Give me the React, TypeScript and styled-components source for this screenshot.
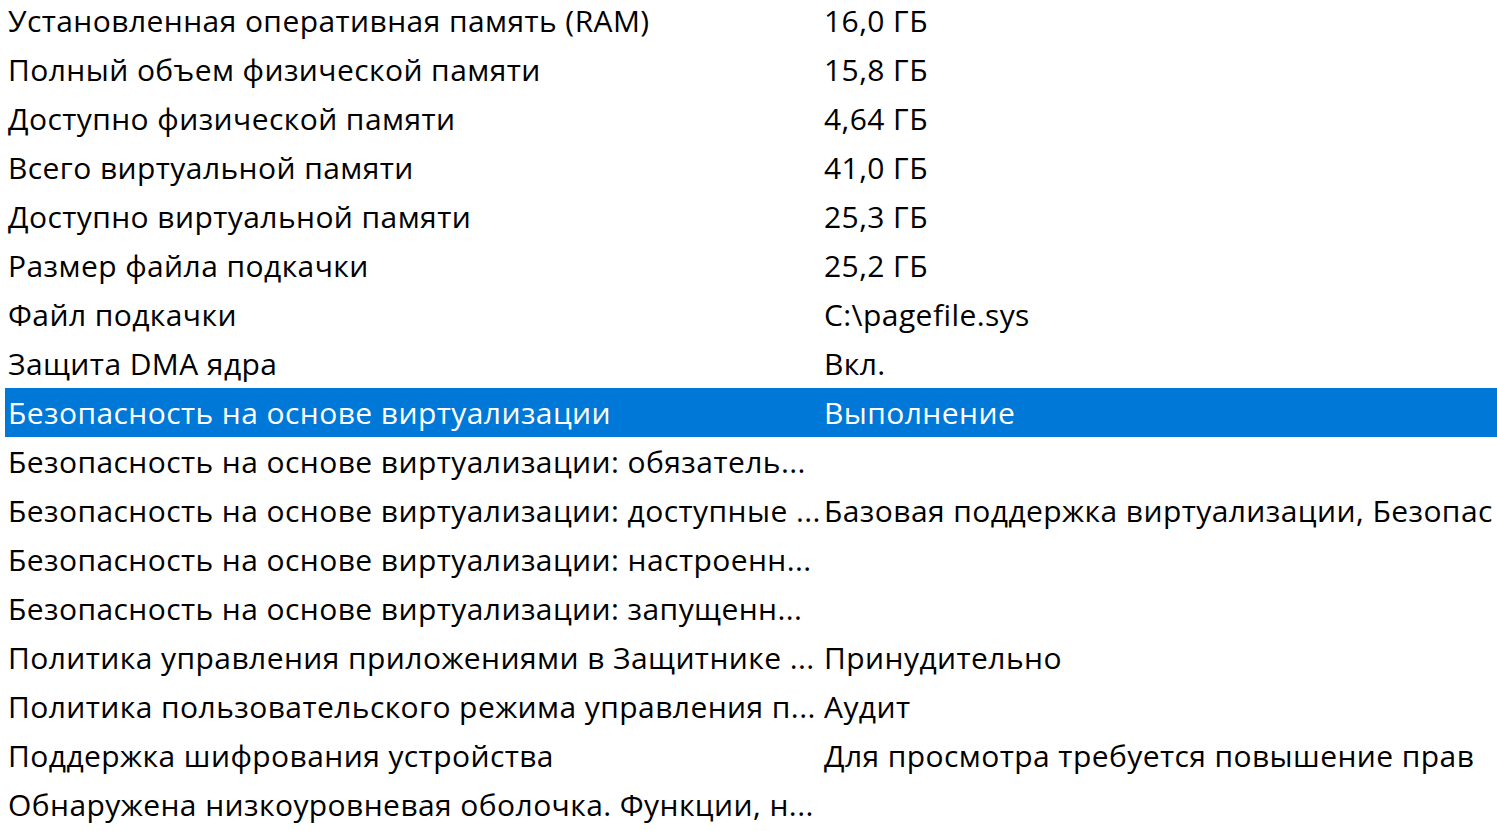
import styled, { createGlobalStyle } from 'styled-components';

const GlobalStyle = createGlobalStyle`
  html, body {
    margin: 0;
    padding: 0;
    background: #ffffff;
    overflow: hidden;
  }
`;

interface Item {
  name: string;
  value: string;
}

// values longer than the pane are shown as far as the window edge
const items: Item[] = [
  { name: 'Установленная оперативная память (RAM)', value: '16,0 ГБ' },
  { name: 'Полный объем физической памяти', value: '15,8 ГБ' },
  { name: 'Доступно физической памяти', value: '4,64 ГБ' },
  { name: 'Всего виртуальной памяти', value: '41,0 ГБ' },
  { name: 'Доступно виртуальной памяти', value: '25,3 ГБ' },
  { name: 'Размер файла подкачки', value: '25,2 ГБ' },
  { name: 'Файл подкачки', value: 'C:\\pagefile.sys' },
  { name: 'Защита DMA ядра', value: 'Вкл.' },
  { name: 'Безопасность на основе виртуализации', value: 'Выполнение' },
  { name: 'Безопасность на основе виртуализации: обязатель...', value: '' },
  {
    name: 'Безопасность на основе виртуализации: доступные ...',
    value: 'Базовая поддержка виртуализации, Безопас',
  },
  { name: 'Безопасность на основе виртуализации: настроенн...', value: '' },
  { name: 'Безопасность на основе виртуализации: запущенн...', value: '' },
  { name: 'Политика управления приложениями в Защитнике ...', value: 'Принудительно' },
  { name: 'Политика пользовательского режима управления п...', value: 'Аудит' },
  { name: 'Поддержка шифрования устройства', value: 'Для просмотра требуется повышение прав' },
  { name: 'Обнаружена низкоуровневая оболочка. Функции, н...', value: '' },
];

const SELECTED = 8;

export default function App() {
  return (
    <>
      <GlobalStyle />
      <List>
        {items.map((item, i) => (
          <Row key={i} selected={i === SELECTED}>
            <Cell>{item.name}</Cell>
            <Cell>{item.value}</Cell>
          </Row>
        ))}
      </List>
    </>
  );
}

const List = styled.div`
  display: flex;
  flex-direction: column;
  margin-top: -4px;
  padding-left: 5px;
  font-family: 'Open Sans', 'Noto Sans', sans-serif;
  font-size: 30px;
  letter-spacing: 0.42px;
  color: #000000;
`;

const Row = styled.div<{ selected: boolean }>`
  display: grid;
  grid-template-columns: 816px 1fr;
  height: 49px;
  align-items: center;
  background: ${({ selected }) => (selected ? '#0078d7' : 'transparent')};
  color: ${({ selected }) => (selected ? '#ffffff' : '#000000')};
`;

const Cell = styled.div`
  padding-left: 3px;
  white-space: nowrap;
  overflow: hidden;
  line-height: 49px;
`;
